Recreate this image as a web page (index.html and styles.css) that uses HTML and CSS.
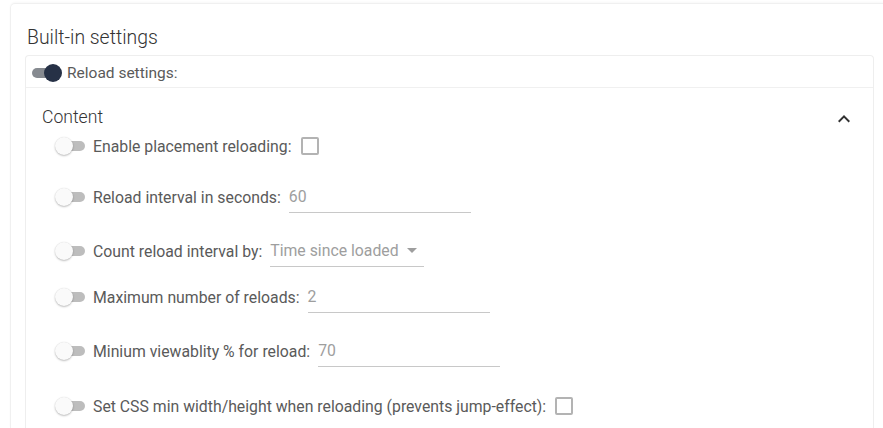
FILE: index.html
```html
<!DOCTYPE html>
<html>
<head>
<meta charset="utf-8">
<link rel="stylesheet" href="styles.css">
</head>
<body>
<div class="outer-card">
  <h2 class="title">Built-in settings</h2>
  <div class="inner-card">
    <div class="card-head">
      <span class="toggle on"><span class="track"></span><span class="knob"></span></span>
      <span class="head-label">Reload settings:</span>
    </div>
    <div class="panel">
      <div class="panel-head">
        <span class="panel-title">Content</span>
        <svg class="chevron" viewBox="0 0 24 24" width="24" height="24"><path d="M12 8l-6 6 1.41 1.41L12 10.83l4.59 4.58L18 14z"/></svg>
      </div>
      <div class="rows">
        <div class="row r1">
          <span class="toggle"><span class="track"></span><span class="knob"></span></span>
          <span class="label">Enable placement reloading:</span>
          <span class="checkbox"></span>
        </div>
        <div class="row r2">
          <span class="toggle"><span class="track"></span><span class="knob"></span></span>
          <span class="label">Reload interval in seconds:</span>
          <span class="field">60</span>
        </div>
        <div class="row r3">
          <span class="toggle"><span class="track"></span><span class="knob"></span></span>
          <span class="label">Count reload interval by:</span>
          <span class="field select">Time since loaded<span class="arrow"></span></span>
        </div>
        <div class="row r4">
          <span class="toggle"><span class="track"></span><span class="knob"></span></span>
          <span class="label">Maximum number of reloads:</span>
          <span class="field">2</span>
        </div>
        <div class="row r5">
          <span class="toggle"><span class="track"></span><span class="knob"></span></span>
          <span class="label">Minium viewablity % for reload:</span>
          <span class="field">70</span>
        </div>
        <div class="row r6">
          <span class="toggle"><span class="track"></span><span class="knob"></span></span>
          <span class="label">Set CSS min width/height when reloading (prevents jump-effect):</span>
          <span class="checkbox"></span>
        </div>
      </div>
    </div>
  </div>
</div>
</body>
</html>
```
FILE: styles.css
```css
html, body {
  margin: 0;
  padding: 0;
  background: #fff;
  overflow: hidden;
}
body {
  font-family: Roboto, "Liberation Sans", sans-serif;
  color: #555;
  height: 428px;
}
.outer-card {
  margin: 3px -20px 0 10px;
  border: 1px solid #f0f0f0;
  border-bottom: 0;
  border-radius: 5px 5px 0 0;
  box-shadow: 0 -1px 2px rgba(0,0,0,0.03);
  padding: 22px 28px 0 14px;
  height: 425px;
  box-sizing: border-box;
  overflow: hidden;
}
.title {
  margin: 0 0 5px 2px;
  font-size: 19.4px;
  font-weight: 300;
  line-height: 24px;
  color: #333;
}
.inner-card {
  border: 1px solid #eeeeee;
  border-bottom: 0;
  border-radius: 4px 4px 0 0;
  height: 400px;
}
.card-head {
  display: flex;
  align-items: center;
  height: 31px;
  padding-left: 6px;
  padding-top: 2px;
  box-sizing: border-box;
}
.head-label {
  font-size: 15.5px;
  margin-left: 5px;
  color: #5a5a5a;
}
.toggle {
  position: relative;
  display: inline-block;
  width: 30px;
  height: 18px;
  flex: none;
}
.toggle .track {
  position: absolute;
  top: 4px;
  left: 4px;
  width: 26px;
  height: 10px;
  border-radius: 5px;
  background: #bdbdbd;
}
.toggle .knob {
  position: absolute;
  top: 0;
  left: 0;
  width: 18px;
  height: 18px;
  border-radius: 50%;
  background: #fafafa;
  box-shadow: 0 1px 2px rgba(0,0,0,0.25), 0 0 1px rgba(0,0,0,0.12);
}
.toggle.on .track {
  left: 0;
  background: #868a90;
}
.toggle.on .knob {
  left: 12px;
  background: #263146;
  box-shadow: none;
}
.panel {
  border-top: 1px solid #f0f0f0;
}
.panel-head {
  display: flex;
  align-items: center;
  justify-content: space-between;
  padding: 17px 17px 0 16px;
  height: 24px;
}
.panel-title {
  font-size: 17.6px;
  font-weight: 300;
  color: #333;
  line-height: 24px;
}
.chevron {
  fill: #333;
  margin-top: 4px;
}
.rows {
  display: flex;
  flex-direction: column;
  padding: 1px 0 0 29px;
}
.row {
  display: flex;
  align-items: center;
  height: 32px;
}
.r2 { margin-top: 19px; }
.r3 { margin-top: 22px; }
.r4 { margin-top: 14px; }
.r5 { margin-top: 22px; }
.r6 { margin-top: 23px; }
.label {
  font-size: 15.8px;
  margin-left: 8px;
  color: #5a5a5a;
  white-space: nowrap;
}
.checkbox {
  width: 14px;
  height: 14px;
  border: 2px solid #b3b3b3;
  border-radius: 2px;
  margin-left: 9px;
  flex: none;
}
.field {
  display: flex;
  align-items: center;
  box-sizing: border-box;
  height: 32px;
  width: 182px;
  margin-left: 8px;
  border-bottom: 1px solid #c8c8c8;
  font-size: 15.8px;
  color: #9e9e9e;
}
.field.select {
  width: 154px;
}
.arrow {
  width: 0;
  height: 0;
  border-left: 5px solid transparent;
  border-right: 5px solid transparent;
  border-top: 5px solid #9e9e9e;
  margin-left: 8px;
}
```
